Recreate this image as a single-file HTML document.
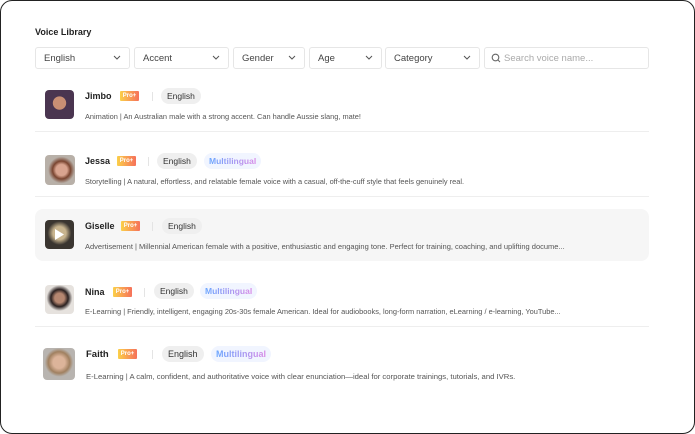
<!DOCTYPE html><html><head><style>
*{margin:0;padding:0;box-sizing:border-box}
body{width:695px;height:434px;background:#fff;font-family:"Liberation Sans",sans-serif;position:relative;overflow:hidden}
.frame{position:absolute;left:0;top:0;width:695px;height:434px;border:1.5px solid #222;border-radius:12px}
.a{position:absolute}
.t{position:absolute;left:35px;top:27px;font-size:9px;font-weight:bold;color:#222}
.f{position:absolute;top:47px;height:22px;border:1px solid #e6e6e6;border-radius:3px;font-size:9.5px;color:#444;padding:5px 8px}
.f svg{position:absolute;right:8px;top:7px}
.sep{position:absolute;left:35px;width:614px;height:1px;background:#eee}
.av{position:absolute;border-radius:4px}
.nm{position:absolute;font-size:9px;font-weight:bold;color:#222}
.pro{position:absolute;width:19px;height:10px;border-radius:1px;background:linear-gradient(90deg,#fbd04a,#f6715a);color:#fff;font-size:6px;font-weight:bold;text-align:center;line-height:10px}
.vl{position:absolute;width:1px;height:9px;background:#e4e4e4}
.pill{position:absolute;height:16px;border-radius:8px;background:#efefef;font-size:8.5px;color:#333;line-height:16px;padding:0 6px}
.ml{position:absolute;height:16px;border-radius:8px;background:#f1f5ff;font-size:8.5px;font-weight:bold;line-height:16px;padding:0 5px}
.ml span{background:linear-gradient(90deg,#6aa6ff,#d98ae6);-webkit-background-clip:text;color:transparent}
.d{position:absolute;font-size:7.4px;color:#555;white-space:nowrap}
</style></head><body>
<div class="frame"></div>
<div class="t">Voice Library</div>
<div class="f" style="left:35px;width:95px">English<svg width="8" height="6"><path d="M1 1l3 3 3-3" stroke="#555" fill="none"/></svg></div>
<div class="f" style="left:134px;width:95px">Accent<svg width="8" height="6"><path d="M1 1l3 3 3-3" stroke="#555" fill="none"/></svg></div>
<div class="f" style="left:233px;width:72px">Gender<svg width="8" height="6"><path d="M1 1l3 3 3-3" stroke="#555" fill="none"/></svg></div>
<div class="f" style="left:309px;width:73px">Age<svg width="8" height="6"><path d="M1 1l3 3 3-3" stroke="#555" fill="none"/></svg></div>
<div class="f" style="left:385px;width:95px">Category<svg width="8" height="6"><path d="M1 1l3 3 3-3" stroke="#555" fill="none"/></svg></div>
<div class="f" style="left:484px;width:165px;color:#aaa;padding-left:19px"><svg width="10" height="10" style="left:6px;right:auto;top:5px"><circle cx="4.5" cy="4.5" r="3.3" stroke="#666" fill="none" stroke-width="1.1"/><path d="M7 7l2 2" stroke="#666"/></svg>Search voice name...</div>

<div class="av" style="left:45px;top:90px;width:29px;height:29px;background:radial-gradient(circle at 50% 45%,#c98f74 30%,#4a3550 32%)"></div>
<div class="nm" style="left:85px;top:91px">Jimbo</div><div class="pro" style="left:120px;top:91px">Pro+</div><div class="vl" style="left:152px;top:92px"></div>
<div class="pill" style="left:161px;top:88px">English</div>
<div class="d" style="left:85px;top:112px">Animation | An Australian male with a strong accent. Can handle Aussie slang, mate!</div>
<div class="sep" style="top:131px"></div>

<div class="av" style="left:45px;top:155px;width:30px;height:30px;background:radial-gradient(circle at 55% 50%,#d9a48f 25%,#7a4530 40%,#b8b0a8 60%)"></div>
<div class="nm" style="left:85px;top:156px">Jessa</div><div class="pro" style="left:117px;top:156px">Pro+</div><div class="vl" style="left:148px;top:157px"></div>
<div class="pill" style="left:157px;top:153px">English</div>
<div class="ml" style="left:204px;top:153px"><span>Multilingual</span></div>
<div class="d" style="left:85px;top:177px">Storytelling | A natural, effortless, and relatable female voice with a casual, off-the-cuff style that feels genuinely real.</div>
<div class="sep" style="top:196px"></div>

<div class="a" style="left:35px;top:209px;width:614px;height:52px;background:#f6f6f6;border-radius:8px"></div>
<div class="av" style="left:45px;top:220px;width:29px;height:29px;background:radial-gradient(circle at 50% 45%,#c8b48e 30%,#3a3530 55%)"></div>
<svg class="a" style="left:54px;top:229px" width="10" height="11"><path d="M1 0l9 5.5-9 5.5z" fill="#fff"/></svg>
<div class="nm" style="left:85px;top:221px">Giselle</div><div class="pro" style="left:121px;top:221px">Pro+</div><div class="vl" style="left:152px;top:222px"></div>
<div class="pill" style="left:162px;top:218px">English</div>
<div class="d" style="left:85px;top:242px;font-size:7.5px">Advertisement | Millennial American female with a positive, enthusiastic and engaging tone. Perfect for training, coaching, and uplifting docume...</div>

<div class="av" style="left:45px;top:285px;width:29px;height:29px;background:radial-gradient(circle at 50% 45%,#b58670 22%,#2a2020 40%,#e6e2de 60%)"></div>
<div class="nm" style="left:85px;top:287px">Nina</div><div class="pro" style="left:113px;top:287px">Pro+</div><div class="vl" style="left:144px;top:288px"></div>
<div class="pill" style="left:154px;top:283px">English</div>
<div class="ml" style="left:200px;top:283px"><span>Multilingual</span></div>
<div class="d" style="left:85px;top:307px">E-Learning | Friendly, intelligent, engaging 20s-30s female American. Ideal for audiobooks, long-form narration, eLearning / e-learning, YouTube...</div>
<div class="sep" style="top:326px"></div>

<div class="av" style="left:43px;top:348px;width:32px;height:32px;background:radial-gradient(circle at 50% 45%,#dcb49a 25%,#a08060 45%,#b8b4b0 60%)"></div>
<div class="nm" style="left:86px;top:349px;font-size:9.5px">Faith</div><div class="pro" style="left:118px;top:349px">Pro+</div><div class="vl" style="left:152px;top:350px"></div>
<div class="pill" style="left:162px;top:346px;font-size:9px">English</div>
<div class="ml" style="left:211px;top:346px;font-size:9px"><span>Multilingual</span></div>
<div class="d" style="left:86px;top:372px;font-size:7.7px">E-Learning | A calm, confident, and authoritative voice with clear enunciation—ideal for corporate trainings, tutorials, and IVRs.</div>
</body></html>
